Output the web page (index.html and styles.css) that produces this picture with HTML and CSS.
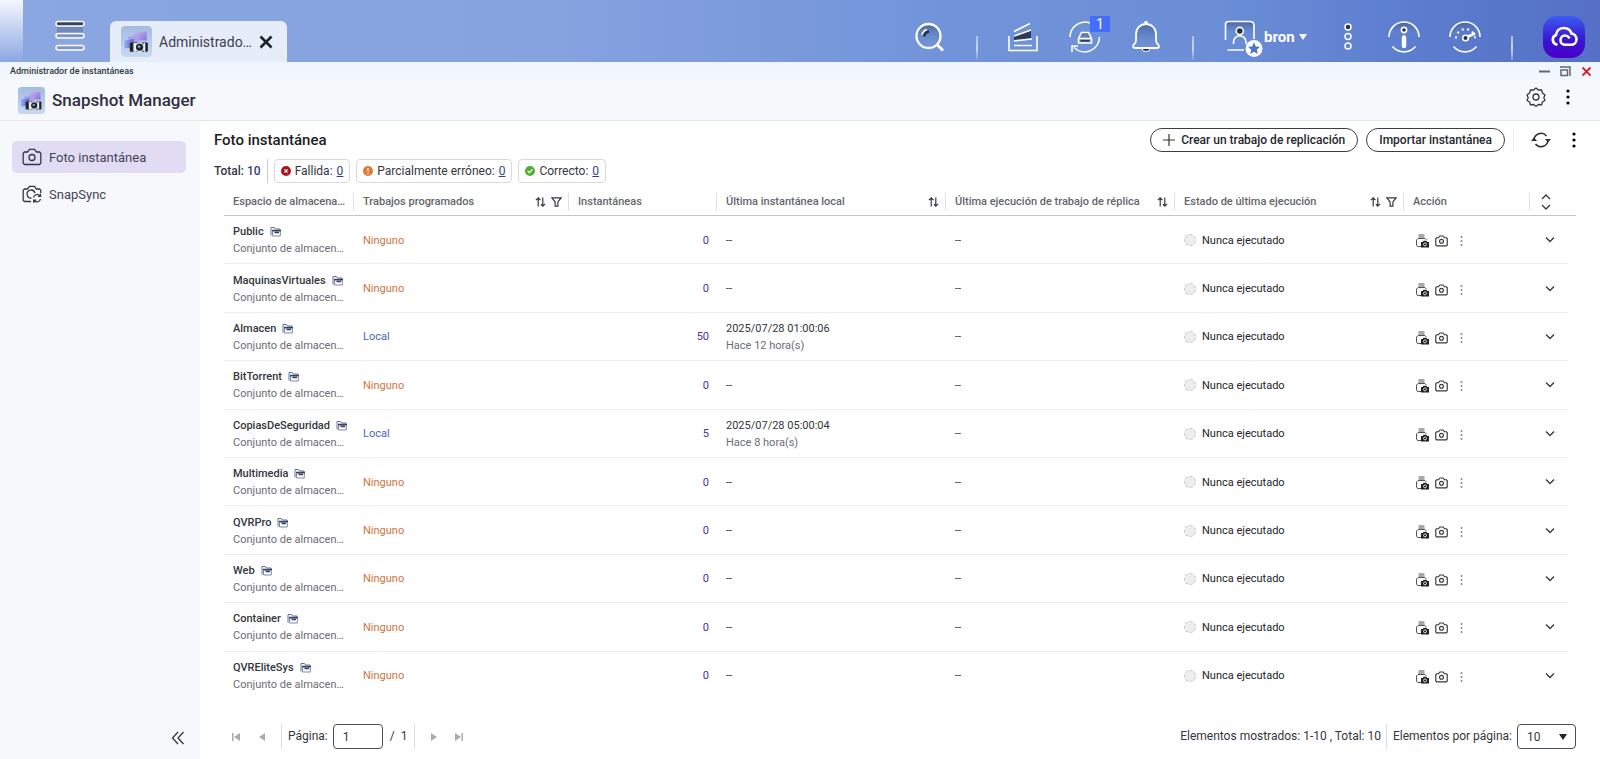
FILE: index.html
```html
<!DOCTYPE html>
<html lang="es">
<head>
  <meta charset="UTF-8" />
  <meta name="viewport" content="width=device-width, initial-scale=1.0" />
  <title>Administrador de instantáneas</title>
  <link rel="stylesheet" href="styles.css">
</head>
<body>

  <!-- Shared icons -->
  <svg class="sprite" aria-hidden="true">
    <defs>
      <linearGradient id="g-tile" x1="0" y1="0" x2="0" y2="1">
        <stop offset="0" stop-color="#a3bbdf" />
        <stop offset="1" stop-color="#c8d9f2" />
      </linearGradient>
      <linearGradient id="g-purple" x1="0" y1="0" x2="1" y2="1">
        <stop offset="0" stop-color="#cdb8f0" />
        <stop offset="1" stop-color="#8a70dd" />
      </linearGradient>
      <linearGradient id="g-blue" x1="0" y1="0" x2="1" y2="0">
        <stop offset="0" stop-color="#8fa6f0" />
        <stop offset="1" stop-color="#5467d4" />
      </linearGradient>
      <linearGradient id="g-glass" x1="0" y1="0" x2="0" y2="1">
        <stop offset="0" stop-color="#40598f" stop-opacity=".75" />
        <stop offset="1" stop-color="#6f92d8" stop-opacity="0" />
      </linearGradient>
    </defs>
    <symbol id="i-app" viewBox="0 0 30 30">
      <rect width="30" height="30" rx="4" fill="url(#g-tile)" />
      <path d="M12 6.500l13-1.500v9H12z" fill="url(#g-purple)" />
      <path d="M7 10.500l11-1V17H7z" fill="#a79fe8" />
      <path d="M3.500 14l9-1.500V21l-9 .5z" fill="url(#g-blue)" />
      <rect x="8.500" y="16" width="17.500" height="9" rx="1" fill="#22252c" />
      <path d="M12 16.500h3V25h-3zM22 16.500h1.500V25H22z" fill="#e8ebf2" />
      <circle cx="18" cy="20.500" r="4.800" fill="#f4f6fb" />
      <circle cx="18" cy="20.500" r="3.500" fill="#1f2733" />
      <circle cx="17.500" cy="20" r="1.400" fill="#6f9fae" />
    </symbol>
    <symbol id="i-camera" viewBox="0 0 20 18">
      <path d="M2.500 4h3l2-2.700h5l2 2.700h3l1.300 1.300v9.900l-1.300 1.300h-15l-1.300-1.300V5.300z" />
      <circle cx="10" cy="9.500" r="3" />
    </symbol>
    <symbol id="i-snapsync" viewBox="0 0 20 18">
      <path d="M9 16.500H2.500l-1.300-1.300V5.300L2.500 4h3l2-2.700h5l2 2.700h3l1.300 1.300V8" />
      <path d="M9.500 13A4 4 0 1 1 13 8" />
      <path d="M11.500 12.500a3.600 3.600 0 0 1 6.500-1.500M18.500 8.800V11.400h-2.600M18.500 14a3.600 3.600 0 0 1-6.400 1.500M11.700 17.800v-2.600h2.600" />
    </symbol>
    <symbol id="i-sort" viewBox="0 0 12 12">
      <path d="M3.500 11V1.500M1 4l2.500-2.500L6 4M8.500 1v9.500M6.500 8.500l2 2L11 8" />
    </symbol>
    <symbol id="i-filter" viewBox="0 0 12 12">
      <path d="M1 1.500h10L7.500 6v4.500h-3V6z" />
    </symbol>
    <symbol id="i-folder" viewBox="0 0 12 11">
      <path d="M1 9.500v-8h3.500l1 1.500H10v1.500" fill="none" stroke="#66728f" />
      <path d="M2.500 10h7.800V5H2.500z" fill="none" stroke="#7f8aa6" />
      <path d="M2 4.500h9M4.500 6.500H9" fill="none" stroke="#33406a" stroke-width="1.500" />
    </symbol>
    <symbol id="i-job" viewBox="0 0 14 14">
      <path d="M3.500 1h6M3.500 3h6M6 12.500H2.500L1.500 11V6L3 4.500h7L11.500 6" fill="none" stroke="#555" />
      <path d="M6 8h1.800l.8-1.300h2.800l.8 1.300H14v5.500H6z" fill="#222" />
      <circle cx="10" cy="10.400" r="1.500" fill="none" stroke="#fff" stroke-width=".8" />
    </symbol>
    <symbol id="i-dots" viewBox="0 0 4 16">
      <circle cx="2" cy="2" r="1.600" /><circle cx="2" cy="8" r="1.600" /><circle cx="2" cy="14" r="1.600" />
    </symbol>
    <symbol id="i-dots-sm" viewBox="0 0 3 12">
      <path d="M.7 1.200h1.600v1.600H.7zM.7 5.200h1.600v1.600H.7zM.7 9.200h1.600v1.600H.7z" fill="#666a72" />
    </symbol>
    <symbol id="i-down" viewBox="0 0 12 8">
      <path d="M2 1.500l4 4 4-4" />
    </symbol>
  </svg>

  <header class="topbar">
    <button class="icon-btn menu-btn" aria-label="Menú principal">
      <svg width="30" height="32" viewBox="0 0 30 32">
        <path d="M2 4h26v12H2z" fill="#5d7099" opacity=".55" />
        <g fill="#7d96c4" stroke="#fff" stroke-width="1.500">
          <rect x="1" y="1.500" width="28" height="4.500" rx="2.200" fill="#39445c" />
          <rect x="1" y="13.500" width="28" height="4.500" rx="2.200" />
          <rect x="1" y="25.500" width="28" height="4.500" rx="2.200" />
        </g>
      </svg>
    </button>
    <div class="tab">
      <svg width="31" height="31"><use href="#i-app" /></svg>
      <span class="tab-name">Administrado…</span>
      <button class="icon-btn" aria-label="Cerrar pestaña">
        <svg width="14" height="14" viewBox="0 0 14 14"><path d="M1.500 1.500l11 11M12.500 1.500l-11 11" stroke="#1c2029" stroke-width="2.600" /></svg>
      </button>
    </div>

    <div class="tools">
      <button class="icon-btn" aria-label="Buscar">
        <svg width="32" height="32" viewBox="0 0 32 32" fill="none" stroke="#fff" stroke-width="2.300">
          <circle cx="14.500" cy="15" r="12" fill="url(#g-glass)" />
          <path d="M23 23.500l6 6" stroke-width="2.800" />
          <path d="M8 14a7 7 0 0 1 5-5.500" stroke-width="1.500" />
          <path d="M10 15.500c.5-3 2-4.500 5-5" stroke="#26304a" stroke-width="2.500" />
        </svg>
      </button>
      <span class="top-sep"></span>
      <div class="tool-group">
        <button class="icon-btn" aria-label="Volúmenes">
          <svg width="32" height="32" viewBox="0 0 32 32" fill="none" stroke="#fff" stroke-width="1.600">
            <path d="M1 15v14.500h28V15M6 24.500h18" />
            <path d="M6 14l17-5v8L6 19z" fill="#2e3a55" stroke="none" />
            <path d="M6 10.500L22 2.500M6 15L23 9M6 20l18-2" />
          </svg>
        </button>
        <button class="icon-btn sync-btn" aria-label="Tareas en segundo plano">
          <svg width="32" height="32" viewBox="0 0 32 32" fill="none" stroke="#fff" stroke-width="1.600">
            <path d="M1 16A15 15 0 0 1 21 2M30.500 16A15 15 0 0 1 5 26.500M3 31v-6h6" />
            <path d="M12.500 11.500h7l3 6v4.500h-13v-4.500zM9.500 17.500h13" fill="url(#g-glass)" />
            <path d="M11.500 19.800h9" stroke="#2e3a55" />
          </svg>
          <span class="badge">1</span>
        </button>
        <button class="icon-btn" aria-label="Notificaciones">
          <svg width="32" height="32" viewBox="0 0 32 32" fill="none" stroke="#fff" stroke-width="1.800">
            <path d="M12 27.500a4 3 0 0 0 8 0z" fill="#26304a" stroke-width="1" />
            <path d="M3 25.500c0-2 3-3 3-6V13a10 10 0 0 1 20 0v6.500c0 3 3 4 3 6 0 1-1 1.500-2 1.500H5c-1 0-2-.5-2-1.500z" fill="url(#g-glass)" />
            <path d="M16 3V0" stroke-width="3" />
          </svg>
        </button>
      </div>
      <span class="top-sep"></span>
      <button class="icon-btn user-btn">
        <svg width="40" height="40" viewBox="0 0 40 40" fill="none" stroke="#fff" stroke-width="1.600">
          <path d="M3 5h26v14H3z" fill="url(#g-glass)" stroke="none" />
          <path d="M1.500 23V7Q1.500 4.500 5 4.500h20q5 0 5 3.500v14M3.500 33H20" />
          <path d="M9.500 27v-2a6 6 0 0 1 12.500 0v2" />
          <circle cx="15.800" cy="14" r="3.600" fill="#26304a" />
          <circle cx="30" cy="31.500" r="8.500" fill="#fff" stroke="none" />
          <path d="M30 25.500l1.800 4 4.200.3-3.200 2.900 1 4.300-3.800-2.300-3.800 2.300 1-4.300-3.200-2.900 4.200-.3z" fill="#5272bd" stroke="none" />
        </svg>
        <span>bron</span>
        <i class="caret"></i>
      </button>
      <button class="icon-btn more-btn" aria-label="Más">
        <svg width="20" height="28" viewBox="0 0 20 28" fill="none" stroke="#fff" stroke-width="1.500">
          <circle cx="10" cy="4" r="3" fill="#26304a" /><circle cx="10" cy="13.500" r="3" /><circle cx="10" cy="23" r="3" />
        </svg>
      </button>
      <div class="tool-group">
        <button class="icon-btn" aria-label="Información">
          <svg width="32" height="32" viewBox="0 0 32 32" fill="none" stroke="#fff" stroke-width="1.600">
            <path d="M1 16a15 15 0 0 1 30 0" fill="url(#g-glass)" stroke="none" />
            <path d="M1 16a15 15 0 0 1 30 0M4.500 25.500a15 15 0 0 0 23 0" />
            <circle cx="16" cy="9" r="2.600" fill="#26304a" />
            <path d="M16 16.500v8.500" stroke-width="4.500" stroke-linecap="round" />
          </svg>
        </button>
        <button class="icon-btn" aria-label="Panel">
          <svg width="32" height="32" viewBox="0 0 32 32" fill="none" stroke="#fff" stroke-width="1.600">
            <path d="M1 16a15 15 0 0 1 30 0" fill="url(#g-glass)" stroke="none" />
            <path d="M1 16a15 15 0 0 1 30 0M4.500 25.500a15 15 0 0 0 23 0" />
            <path d="M7 17.500a9.500 9.500 0 1 1 19 0" stroke-width="2" stroke-dasharray="2 3.500" />
            <path d="M18 16l8-3.500" stroke-width="2.500" />
            <circle cx="16.500" cy="17" r="2.800" fill="#26304a" />
          </svg>
        </button>
      </div>
      <span class="top-sep"></span>
      <button class="icon-btn cloud-btn" aria-label="myQNAPcloud">
        <svg width="28" height="22" viewBox="0 0 28 22" fill="none" stroke="#fff" stroke-width="2.600" stroke-linecap="round">
          <path d="M6.500 18.500A5 5 0 0 1 6 9C6.500 4.500 10 2 14 2s6.500 2.500 7.500 5.500c3 .5 5 3 5 5.700 0 3.300-2.500 5.600-5.500 5.600h-5.500c-3 0-5-2-5-4.600s2-4.700 4.600-4.700c1.700 0 3 .7 3.900 2" />
        </svg>
      </button>
    </div>
  </header>

  <div class="titlebar">
    <span>Administrador de instantáneas</span>
    <div class="win-controls">
      <button class="icon-btn" aria-label="Minimizar"><svg width="11" height="11" viewBox="0 0 11 11"><path d="M0 5.500h11" stroke="#616872" stroke-width="2" /></svg></button>
      <button class="icon-btn" aria-label="Restaurar"><svg width="11" height="11" viewBox="0 0 11 11" fill="none" stroke="#616872" stroke-width="1.500"><path d="M0 1h10v9" /><path d="M1 4h6.500v5.500H1z" /></svg></button>
      <button class="icon-btn" aria-label="Cerrar"><svg width="11" height="11" viewBox="0 0 11 11"><path d="M1.500 1.500l8 8M9.500 1.500l-8 8" stroke="#d5222f" stroke-width="1.800" /></svg></button>
    </div>
  </div>

  <div class="app-header">
    <svg width="27" height="27"><use href="#i-app" /></svg>
    <h1>Snapshot Manager</h1>
    <div class="app-actions">
      <button class="icon-btn" aria-label="Configuración">
        <svg width="20" height="20" viewBox="0 0 20 20" fill="none" stroke="#333842" stroke-width="1.300" stroke-linejoin="round">
          <path d="M10 1l2.400 2 3.200-.2.700 3.100L19 8l-1.200 2.800L19 13.500l-2.700 1.500-.7 2.800-3.200-.3L10 19.300l-2.400-1.800-3.200.3-.7-2.800L1 13.500l1.200-2.700L1 8l2.700-2.100.7-3.100 3.200.2z" />
          <circle cx="10" cy="10" r="3" />
        </svg>
      </button>
      <button class="icon-btn" aria-label="Más opciones"><svg width="4" height="16"><use href="#i-dots" /></svg></button>
    </div>
  </div>

  <div class="layout">
    <nav class="sidebar">
      <a href="#" class="nav-item active"><svg class="line" width="20" height="18"><use href="#i-camera" /></svg>Foto instantánea</a>
      <a href="#" class="nav-item"><svg class="line" width="20" height="18"><use href="#i-snapsync" /></svg>SnapSync</a>
      <button class="icon-btn collapse" aria-label="Contraer">
        <svg class="line" width="14" height="14" viewBox="0 0 14 14"><path d="M7 1L1.500 7 7 13M12.500 1L7 7l5.500 6" /></svg>
      </button>
    </nav>

    <main class="content">
      <div class="page-head">
        <h2>Foto instantánea</h2>
        <div class="page-actions">
          <button class="pill"><svg width="12" height="12" viewBox="0 0 12 12"><path d="M6 0v12M0 6h12" stroke="#333" stroke-width="1.200" /></svg>Crear un trabajo de replicación</button>
          <button class="pill">Importar instantánea</button>
          <span class="sep"></span>
          <button class="icon-btn refresh" aria-label="Actualizar">
            <svg width="20" height="16" viewBox="0 0 20 16" fill="none" stroke="#2b2f38" stroke-width="1.500">
              <path d="M3 8.500a7 7 0 0 1 12.500-4.500M17 7.500a7 7 0 0 1-12.500 4.500" />
              <path d="M0 9l3-3.500L6 9zM14 7l3 3.500L20 7z" fill="#2b2f38" stroke="none" />
            </svg>
          </button>
          <button class="icon-btn" aria-label="Más opciones"><svg width="4" height="16"><use href="#i-dots" /></svg></button>
        </div>
      </div>

      <div class="summary">
        <span class="total">Total: <b>10</b></span>
        <span class="chip">
          <svg width="10" height="10" viewBox="0 0 10 10"><circle cx="5" cy="5" r="5" fill="#ad1420" /><path d="M3.400 3.400l3.200 3.200M6.600 3.400L3.400 6.600" stroke="#fff" stroke-width="1.200" /></svg>
          Fallida: <a href="#">0</a>
        </span>
        <span class="chip">
          <svg width="10" height="10" viewBox="0 0 10 10"><circle cx="5" cy="5" r="5" fill="#e07a35" /><path d="M5 2v3.800M5 7v1.200" stroke="#fff" stroke-width="1.200" /></svg>
          Parcialmente erróneo: <a href="#">0</a>
        </span>
        <span class="chip">
          <svg width="10" height="10" viewBox="0 0 10 10"><circle cx="5" cy="5" r="5" fill="#52ad32" /><path d="M2.700 5l1.700 1.700 3-3.200" stroke="#fff" stroke-width="1.200" fill="none" /></svg>
          Correcto: <a href="#">0</a>
        </span>
      </div>

      <div class="table-wrap">
        <table>
          <colgroup>
            <col class="c-name"><col class="c-jobs"><col class="c-count"><col><col><col><col class="c-action"><col class="c-expand">
          </colgroup>
          <thead>
            <tr>
              <th><div class="th">Espacio de almacena…</div></th>
              <th><div class="th">Trabajos programados <span class="th-icons"><svg class="line"><use href="#i-sort" /></svg><svg class="line"><use href="#i-filter" /></svg></span></div></th>
              <th><div class="th">Instantáneas</div></th>
              <th><div class="th">Última instantánea local <span class="th-icons"><svg class="line"><use href="#i-sort" /></svg></span></div></th>
              <th><div class="th">Última ejecución de trabajo de réplica <span class="th-icons"><svg class="line"><use href="#i-sort" /></svg></span></div></th>
              <th><div class="th">Estado de última ejecución <span class="th-icons"><svg class="line"><use href="#i-sort" /></svg><svg class="line"><use href="#i-filter" /></svg></span></div></th>
              <th><div class="th">Acción</div></th>
              <th><div class="th"><button class="icon-btn expand-all" aria-label="Expandir todo"><svg class="line" width="12" height="16" viewBox="0 0 12 16"><path d="M2 5l4-4 4 4M2 11l4 4 4-4" /></svg></button></div></th>
            </tr>
          </thead>
          <tbody id="rows"></tbody>
        </table>
      </div>

      <footer class="pager">
        <button class="icon-btn" aria-label="Primera página"><svg width="9" height="10" viewBox="0 0 9 10" fill="#a9abb0"><path d="M0 1h1.500v8H0zM8 1v8L2 5z" /></svg></button>
        <button class="icon-btn prev" aria-label="Página anterior"><svg width="9" height="10" viewBox="0 0 9 10" fill="#a9abb0"><path d="M7 1v8L1 5z" /></svg></button>
        <span class="sep"></span>
        <label for="page">Página:</label>
        <input type="text" id="page" value="1">
        <span class="pages">/&nbsp; 1</span>
        <span class="sep"></span>
        <button class="icon-btn next" aria-label="Página siguiente"><svg width="9" height="10" viewBox="0 0 9 10" fill="#a9abb0"><path d="M2 1v8l6-4z" /></svg></button>
        <button class="icon-btn last" aria-label="Última página"><svg width="9" height="10" viewBox="0 0 9 10" fill="#a9abb0"><path d="M1 1v8l6-4zM7.500 1H9v8H7.500z" /></svg></button>
        <span class="shown">Elementos mostrados: 1-10 , Total: 10</span>
        <span class="sep"></span>
        <label for="per-page">Elementos por página:</label>
        <span class="select">
          <select id="per-page">
            <option selected>10</option>
            <option>20</option>
            <option>50</option>
          </select>
        </span>
      </footer>
    </main>
  </div>

  <script>
    const shares = [
      { name: "Public", count: 0 },
      { name: "MaquinasVirtuales", count: 0 },
      { name: "Almacen", count: 50, last: "2025/07/28 01:00:06", ago: "Hace 12 hora(s)" },
      { name: "BitTorrent", count: 0 },
      { name: "CopiasDeSeguridad", count: 5, last: "2025/07/28 05:00:04", ago: "Hace 8 hora(s)" },
      { name: "Multimedia", count: 0 },
      { name: "QVRPro", count: 0 },
      { name: "Web", count: 0 },
      { name: "Container", count: 0 },
      { name: "QVREliteSys", count: 0 },
    ];

    document.getElementById("rows").innerHTML = shares.map((s) => `
      <tr>
        <td>
          <div class="name">${s.name}<svg width="12" height="11"><use href="#i-folder" /></svg></div>
          <div class="sub">Conjunto de almacen…</div>
        </td>
        <td><a href="#" class="${s.last ? "job" : "job none"}">${s.last ? "Local" : "Ninguno"}</a></td>
        <td class="count"><a href="#">${s.count}</a></td>
        <td>${s.last ? `<div>${s.last}</div><div class="sub">${s.ago}</div>` : "--"}</td>
        <td>--</td>
        <td><div class="state"><i></i>Nunca ejecutado</div></td>
        <td>
          <div class="actions">
            <button class="icon-btn" aria-label="Programar"><svg width="14" height="14"><use href="#i-job" /></svg></button>
            <button class="icon-btn" aria-label="Tomar instantánea"><svg class="line" width="13" height="12"><use href="#i-camera" /></svg></button>
            <button class="icon-btn" aria-label="Más"><svg width="3" height="12"><use href="#i-dots-sm" /></svg></button>
          </div>
        </td>
        <td class="expand"><button class="icon-btn" aria-label="Expandir"><svg class="line" width="12" height="8"><use href="#i-down" /></svg></button></td>
      </tr>`).join("");
  </script>

</body>
</html>
```
FILE: styles.css
```css
* {
  box-sizing: border-box;
}

body {
  margin: 0;
  min-height: 100vh;
  display: flex;
  flex-direction: column;
  font-family: Roboto, "Liberation Sans", sans-serif;
  font-size: 12px;
  color: #33363e;
  background: #fff;
}

h1, h2 {
  margin: 0;
  font-weight: 500;
}

a {
  color: inherit;
  text-decoration: none;
}

svg {
  display: block;
  flex: none;
}

.sprite {
  position: absolute;
  width: 0;
  height: 0;
}

.line {
  fill: none;
  stroke: #333842;
  stroke-width: 1.3;
}

.icon-btn {
  display: flex;
  align-items: center;
  padding: 0;
  border: none;
  background: none;
  color: inherit;
  font: inherit;
  cursor: pointer;
}

/* Desktop bar */
.topbar {
  display: flex;
  height: 62px;
  padding: 0 15px 0 55px;
  background:
    linear-gradient(to bottom, #f4f7fd, #8ba8e200) no-repeat 0 0 / 23px 100%,
    linear-gradient(to right, #8ba7e2 0%, #86a2df 35%, #7093d9 60%, #6b8ed7 76%, #5a7bce 90%, #5570c6 100%);
}

.menu-btn {
  margin-top: 10px;
}

.tab {
  display: flex;
  align-items: center;
  gap: 7px;
  width: 177px;
  height: 41px;
  margin: 21px 0 0 25px;
  padding: 0 14px 0 11px;
  border-radius: 6px 6px 0 0;
  background: #e6ecf8;
}

.tab-name {
  flex: 1;
  font-size: 14px;
  color: #3a4050;
  white-space: nowrap;
}

.tools {
  display: flex;
  align-items: center;
  gap: 30px;
  margin-left: auto;
  padding-top: 11px;
}

.tool-group {
  display: flex;
  gap: 29px;
}

.top-sep {
  width: 2px;
  height: 24px;
  margin-top: 22px;
  background: linear-gradient(to bottom, #a9bfec, #c8d6f3, #7f9ddd);
}

.sync-btn {
  position: relative;
}

.badge {
  position: absolute;
  top: -5px;
  left: 21px;
  width: 20px;
  height: 16px;
  background: #446dfb;
  color: #fff;
  font-size: 14px;
  line-height: 16px;
  text-align: center;
}

.user-btn {
  width: 84px;
  color: #fff;
  font-size: 15px;
  font-weight: 700;
}

.caret {
  margin-left: 4px;
  border: 4px solid transparent;
  border-top: 6px solid #fff;
  border-bottom: none;
}

.cloud-btn {
  justify-content: center;
  width: 42px;
  height: 42px;
  border-radius: 14px;
  background: linear-gradient(to bottom, #3c5cf2, #3a12cf 60%, #4a00c8);
}

/* Window title */
.titlebar {
  display: flex;
  justify-content: space-between;
  align-items: center;
  height: 18px;
  padding: 0 8px 0 10px;
  background: linear-gradient(to bottom, #eff5fe, #f4f7fd);
  font-size: 9px;
  font-weight: 500;
}

.win-controls {
  display: flex;
  gap: 10px;
}

.app-header {
  display: flex;
  align-items: center;
  gap: 7px;
  height: 41px;
  padding: 0 30px 0 18px;
  border-bottom: 1px solid #e6e7eb;
  background: #f7f8fb;
}

.app-header h1 {
  font-size: 17px;
  color: #2f2f42;
}

.app-actions {
  display: flex;
  gap: 20px;
  margin: 0 0 7px auto;
}

.layout {
  display: flex;
  flex: 1;
}

.sidebar {
  display: flex;
  flex-direction: column;
  gap: 5px;
  width: 200px;
  padding: 20px 14px 14px 12px;
  background: #f7f8fb;
}

.nav-item {
  display: flex;
  align-items: center;
  gap: 7px;
  height: 32px;
  padding-left: 10px;
  border-radius: 5px;
  font-size: 13px;
  color: #414556;
}

.nav-item.active {
  background: #e1dcf4;
}

.collapse {
  margin: auto 1px 0 auto;
}

.content {
  display: flex;
  flex-direction: column;
  flex: 1;
  min-width: 0;
  padding: 0 24px 0 14px;
}

.page-head {
  display: flex;
  justify-content: space-between;
  align-items: center;
  height: 38px;
}

.page-head h2 {
  font-size: 15px;
  color: #1c1d22;
}

.page-actions {
  display: flex;
  align-items: center;
  gap: 8px;
}

.pill {
  display: flex;
  align-items: center;
  gap: 6px;
  height: 24px;
  padding: 0 12px;
  border: 1px solid #3a3d45;
  border-radius: 12px;
  background: #fff;
  color: #25272d;
  font: 500 12px Roboto, "Liberation Sans", sans-serif;
}

.sep {
  width: 1px;
  height: 25px;
  background: #dcdde1;
}

.page-actions .sep {
  background: #ececef;
}

.refresh {
  margin: 0 13px 0 9px;
}

.summary {
  display: flex;
  align-items: center;
  gap: 6px;
  height: 24px;
  white-space: nowrap;
}

.total {
  height: 24px;
  padding-right: 6px;
  border-right: 1px solid #c9cbd0;
  font-weight: 500;
  line-height: 24px;
}

.total b {
  font-weight: 500;
  color: #33407e;
}

.chip {
  display: flex;
  align-items: center;
  gap: 4px;
  height: 24px;
  padding: 0 6px;
  border: 1px solid #d9dadf;
  border-radius: 4px;
}

.chip a {
  color: #33407e;
  text-decoration: underline;
}

/* Shares table */
.table-wrap {
  flex: 1;
  display: flex;
  margin: 5px 0 0 10px;
}

table {
  width: 100%;
  table-layout: fixed;
  border-collapse: separate;
  border-spacing: 0;
  font-size: 11px;
}

.c-name {
  width: 130px;
}

.c-jobs {
  width: 215px;
}

.c-count {
  width: 148px;
}

.c-action {
  width: 126px;
}

.c-expand {
  width: 46px;
}

th {
  height: 28px;
  padding: 0;
  border-bottom: 1px solid #c4c5c9;
  font-weight: 500;
  color: #63666d;
  text-align: left;
  white-space: nowrap;
}

.th {
  display: flex;
  justify-content: space-between;
  align-items: center;
  height: 18px;
  padding: 0 6px 0 9px;
  border-right: 1px solid #dfe0e3;
}

th:last-child .th {
  border-right: none;
}

.th-icons {
  display: flex;
  gap: 5px;
}

.th-icons svg {
  width: 11px;
  height: 12px;
}

.expand-all {
  margin-left: 1px;
}

td {
  height: 48px;
  padding: 0 8px 0 9px;
  background: linear-gradient(#ececee, #ececee) no-repeat 0 100% / 100% 1px;
  line-height: 17px;
  white-space: nowrap;
}

/* row rule stops short of the header rule */
td:last-child {
  background-size: calc(100% - 8px) 1px;
}

tr:last-child td {
  background: none;
}

.name {
  display: flex;
  align-items: center;
  gap: 6px;
  font-weight: 500;
}

.sub {
  color: #6a6d74;
}

.job {
  color: #4a63c4;
}

.job.none {
  color: #cf7440;
}

.count {
  color: #4a2f9e;
  text-align: right;
}

.state {
  display: flex;
  align-items: center;
  gap: 6px;
  color: #222429;
}

.state i {
  width: 12px;
  height: 12px;
  border: 1px dashed #c3c5c9;
  border-radius: 50%;
  background: #ededf0;
}

.actions {
  display: flex;
  align-items: center;
  gap: 6px;
  padding: 2px 0 0 2px;
}

.actions button:last-child {
  margin-left: 6px;
}

.actions .line {
  stroke-width: 1.8;
}

td.expand {
  padding-left: 14px;
}

/* Pagination */
.pager {
  display: flex;
  align-items: flex-start;
  height: 59px;
  padding: 24px 0 0 18px;
  line-height: 25px;
  white-space: nowrap;
}

.pager .icon-btn {
  height: 25px;
}

.prev {
  margin: 0 14px 0 17px;
}

.pager label {
  margin: 0 5px 0 6px;
}

.pager input,
.pager select {
  height: 25px;
  border: 1px solid #4c4f57;
  border-radius: 4px;
  background: #fff;
  color: #33363e;
  font: 12px Roboto, "Liberation Sans", sans-serif;
}

.pager input {
  width: 50px;
  padding: 0 9px;
}

.pages {
  margin: 0 7px;
}

.next {
  margin: 0 16px 0 14px;
}

.shown {
  margin: 0 5px 0 auto;
}

.select {
  position: relative;
}

.select select {
  display: block;
  width: 59px;
  padding: 0 9px;
  appearance: none;
}

.select::after {
  content: "";
  position: absolute;
  top: 10px;
  right: 9px;
  border: 4px solid transparent;
  border-top: 6px solid #22242a;
  border-bottom: none;
  pointer-events: none;
}
```
